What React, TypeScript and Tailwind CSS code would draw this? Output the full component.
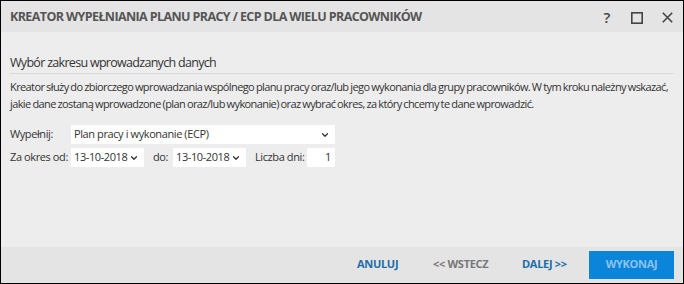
import { ChevronDown } from 'lucide-react'

const font = { fontFamily: '"Open Sans", "Noto Sans", sans-serif' }

function DateSelect({ value }: { value: string }) {
  return (
    <div className="flex h-[19px] w-[73px] items-center justify-between bg-white pl-[3px] pr-[5px]">
      <span>{value}</span>
      <ChevronDown size={10} strokeWidth={3} className="text-[#333]" />
    </div>
  )
}

export default function App() {
  return (
    <div className="flex h-[284px] w-[684px] flex-col whitespace-nowrap border border-black bg-[#ededed] text-[11px] tracking-[-0.4px] text-[#333]" style={font}>
      {/* title bar */}
      <div className="flex h-[31px] items-center justify-between bg-[#e4e4e4] pl-[9px] pr-[10px] pt-[2px]">
        <h1 className="text-[12.5px] font-bold tracking-[-0.6px] text-[#555]">KREATOR WYPEŁNIANIA PLANU PRACY / ECP DLA WIELU PRACOWNIKÓW</h1>
        <div className="flex items-center text-[#444]">
          <span className="text-[15px] font-semibold leading-none">?</span>
          <svg className="ml-[21px]" width="12" height="12" viewBox="0 0 12 12"><rect x="0.8" y="0.8" width="10.4" height="10.4" fill="none" stroke="currentColor" strokeWidth="1.6" /></svg>
          <svg className="ml-[19px]" width="11" height="11" viewBox="0 0 11 11"><path d="M0.8 0.8 L10.2 10.2 M10.2 0.8 L0.8 10.2" stroke="currentColor" strokeWidth="1.6" /></svg>
        </div>
      </div>

      {/* body */}
      <div className="flex-1 px-[9px] pt-[22px]">
        <h2 className="border-b border-[#d9d9d9] pb-[1px] text-[12.5px] leading-[18px] tracking-[-0.7px] text-[#333]">Wybór zakresu wprowadzanych danych</h2>
        <p className="mt-[4px] leading-[17px] tracking-[-0.6px] [word-spacing:-0.5px]">
          Kreator służy do zbiorczego wprowadzania wspólnego planu pracy oraz/lub jego wykonania dla grupy pracowników. W tym kroku należny wskazać,
          <br />
          jakie dane zostaną wprowadzone (plan oraz/lub wykonanie) oraz wybrać okres, za który chcemy te dane wprowadzić.
        </p>

        <div className="mt-[13px] flex flex-col gap-[4px]">
          <div className="flex items-center">
            <span className="w-[61px]">Wypełnij:</span>
            <div className="flex h-[19px] w-[264px] items-center justify-between bg-white pl-[3px] pr-[5px]">
              <span>Plan pracy i wykonanie (ECP)</span>
              <ChevronDown size={10} strokeWidth={3} className="text-[#333]" />
            </div>
          </div>
          <div className="flex items-center">
            <span className="w-[61px]">Za okres od:</span>
            <DateSelect value="13-10-2018" />
            <span className="ml-[9px] w-[20px]">do:</span>
            <DateSelect value="13-10-2018" />
            <span className="ml-[9px] w-[52px]">Liczba dni:</span>
            <div className="flex h-[19px] w-[28px] items-center justify-end bg-white pr-[4px]">1</div>
          </div>
        </div>
      </div>

      {/* footer */}
      <div className="flex h-[36px] items-center justify-end bg-[#e4e4e4] pr-[9px] pb-[1px] text-[11px] font-bold tracking-[-0.3px]">
        <button className="w-[76px] text-left text-[#1d6ea8]">ANULUJ</button>
        <button className="w-[89px] text-left text-[#777]">&lt;&lt; WSTECZ</button>
        <button className="w-[67px] text-left text-[#1d6ea8]">DALEJ &gt;&gt;</button>
        <button className="h-[28px] w-[85px] bg-[#0b85d9] text-[#8cc3ec]">WYKONAJ</button>
      </div>
    </div>
  )
}
